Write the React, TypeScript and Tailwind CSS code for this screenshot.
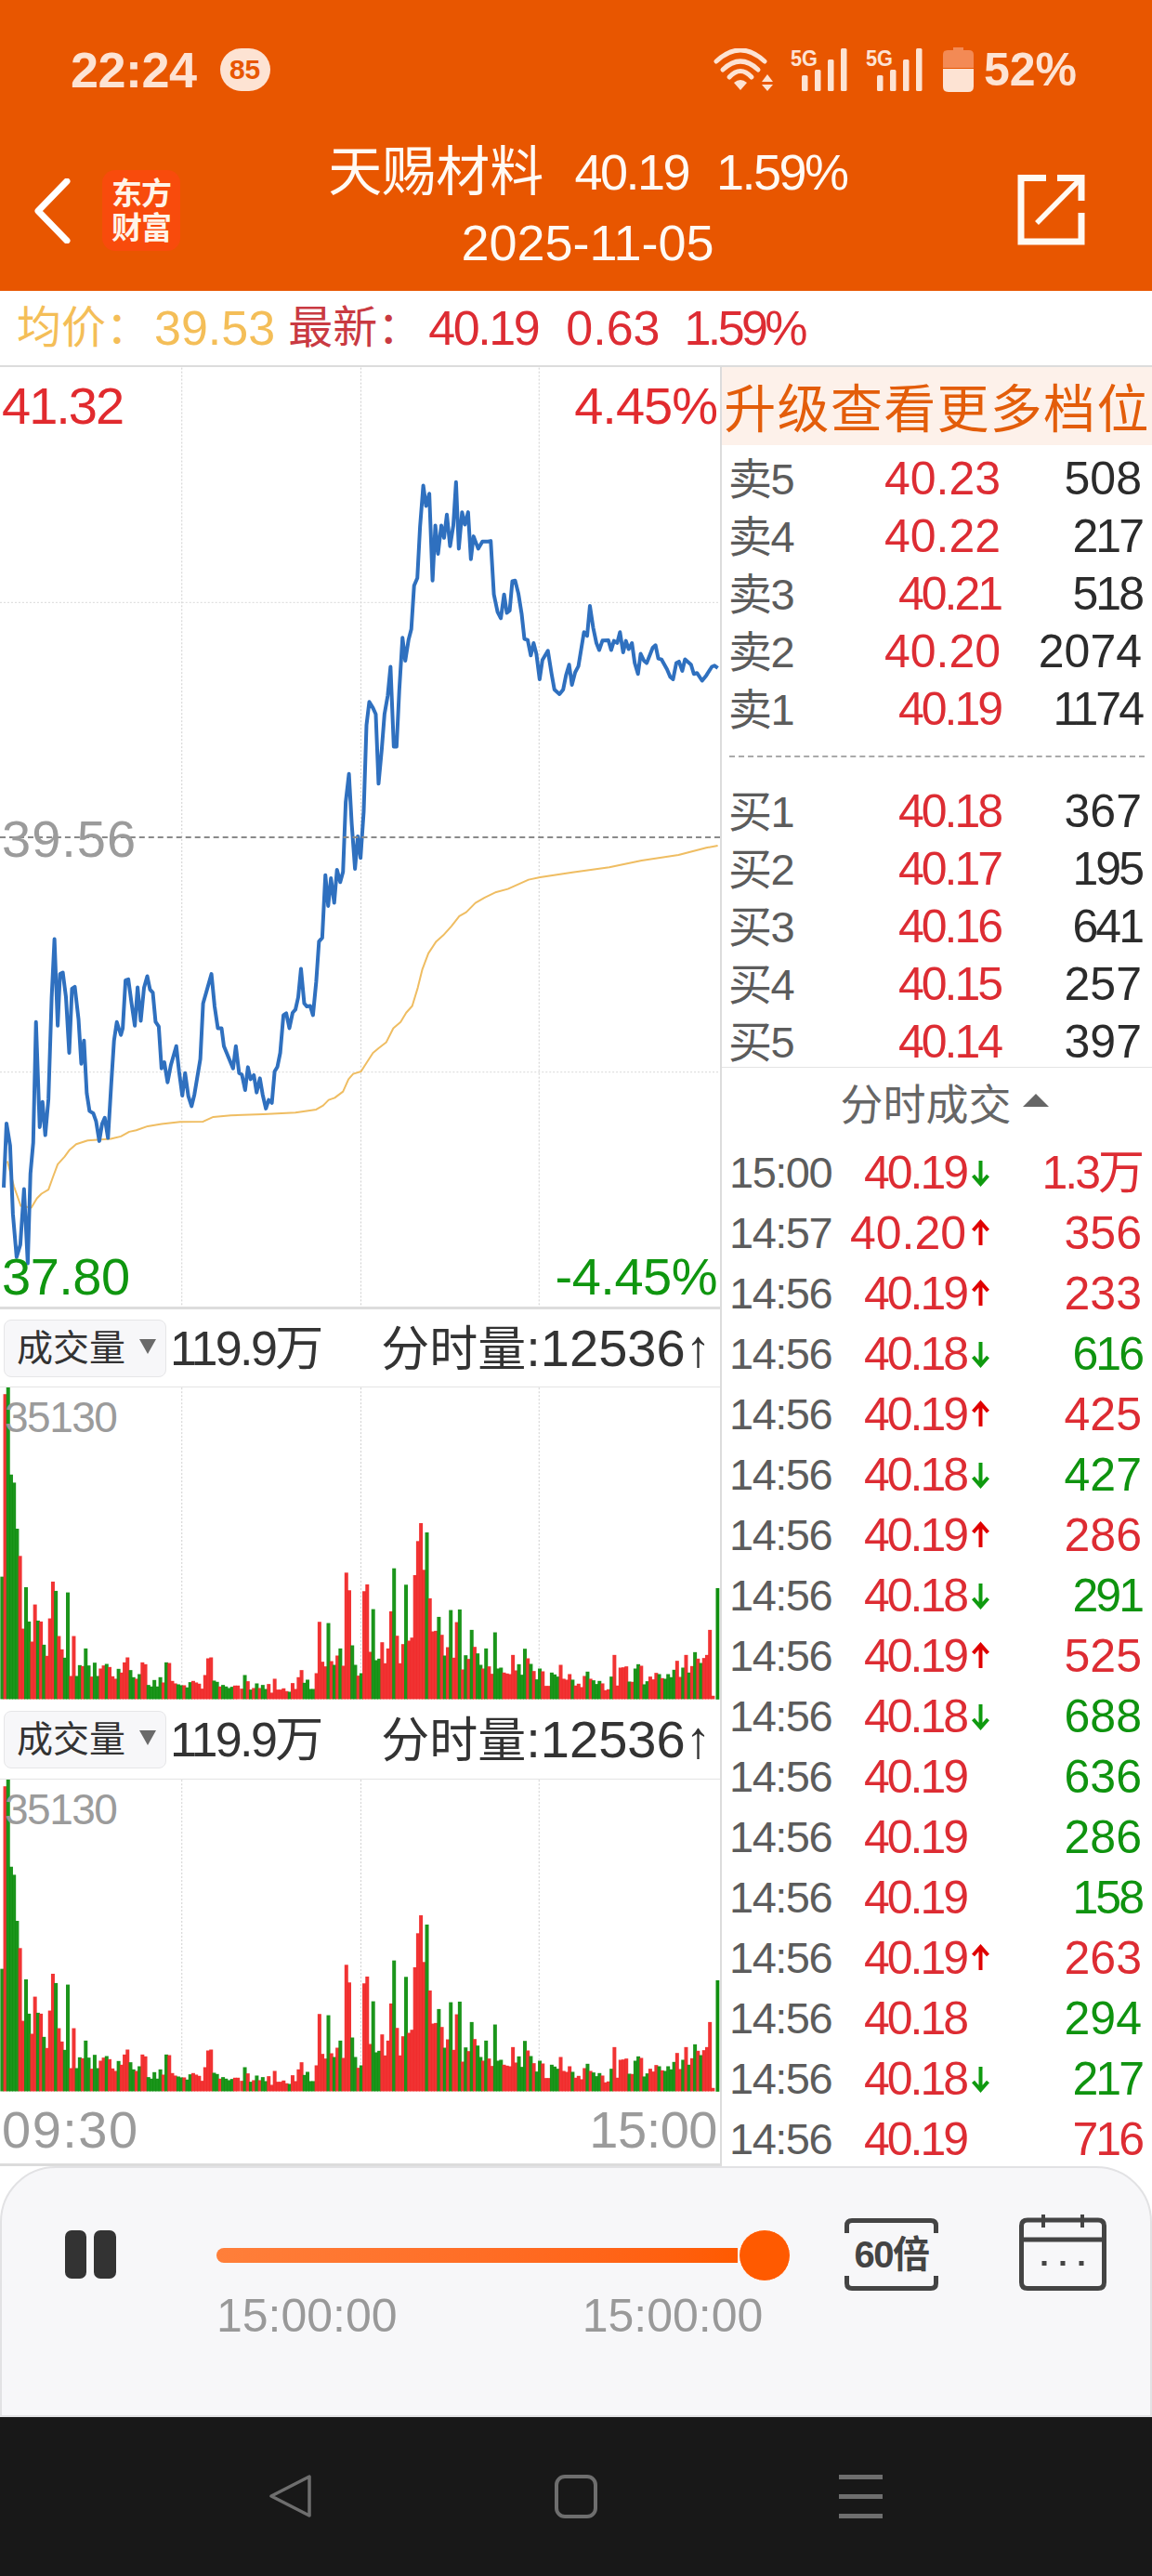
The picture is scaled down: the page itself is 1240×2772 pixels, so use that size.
import React from 'react';

// price curve, read off the reference at x*2.01 / y*3
const priceLow = '8,1135 14,928 22,1000 28,1220 36,1360 44,1320 52,1140 60,1380 66,1090 72,990 78,600 86,940 92,858 98,966 105,850 112,520 118,332 125,612 130,445 136,440 143,520 150,700 156,492 162,486 170,590 176,735 182,660 188,830 194,888 202,895 208,920 215,985 221,930 227,910 234,975 241,800 247,660 253,600 262,642 266,620 272,465 278,462 285,540 292,612 298,488 305,596 312,490 319,452 325,495 331,505 337,600 344,615 350,750 356,730 363,795 370,740 382,678 388,760 395,838 401,765 408,840 415,872 421,835 434,720 440,540 458,445 465,550 472,620 480,620 485,678 505,750 511,678 518,765 524,770 531,820 537,746 543,785 550,772 556,828 563,782 569,835 576,880 582,852 589,862 595,760 601,745 607,700 614,578 620,572 627,620 634,570 640,560 646,520 652,428 659,540 665,550 672,548 678,578 685,470 691,340 698,328 705,125 711,225 717,135 724,215 730,108 737,148 743,115';
const priceHigh = '749,1420 756,1328 762,1490 769,1635 775,1530 781,1600 788,1450 794,1170 800,1095 808,1115 814,1135 820,1360 827,1250 833,1135 840,1075 846,982 853,1240 859,1240 865,1060 872,888 878,962 885,895 891,860 897,720 904,695 910,530 917,396 923,462 930,422 937,703 943,525 949,617 956,525 962,565 968,490 975,592 982,525 988,385 994,600 1001,482 1007,522 1014,482 1020,634 1026,560 1036,600 1045,577 1057,577 1063,575 1070,748 1078,805 1085,825 1092,748 1098,808 1104,800 1110,705 1116,703 1123,745 1130,810 1136,892 1143,895 1150,945 1156,905 1162,940 1169,1022 1175,960 1187,930 1195,1005 1201,1055 1212,1070 1220,1055 1226,1010 1233,975 1239,1040 1246,1000 1253,980 1265,870 1272,882 1278,785 1285,855 1292,905 1298,928 1305,897 1318,896 1324,928 1330,898 1337,905 1343,870 1350,935 1356,898 1362,925 1369,905 1375,970 1382,1005 1388,940 1395,962 1401,970 1414,920 1420,912 1426,955 1433,958 1445,990 1452,1015 1458,1022 1465,970 1471,965 1478,995 1484,958 1497,975 1503,1005 1510,1002 1521,1027 1530,1010 1542,982 1548,978 1555,986';
const avgLine = '16,1050 30,1130 45,1195 68,1200 80,1170 90,1155 105,1142 115,1100 125,1060 140,1035 150,1015 165,995 190,983 240,978 262,970 280,955 295,950 320,937 350,930 390,923 440,922 462,907 500,902 570,898 640,893 685,883 700,870 712,852 725,845 743,825 755,785 765,768 782,760 795,730 808,700 820,685 837,665 852,620 868,600 880,570 893,548 905,490 915,430 928,378 945,340 960,320 978,290 995,258 1010,245 1030,215 1050,198 1075,180 1100,170 1145,140 1170,132 1240,116 1320,100 1390,78 1470,60 1530,37 1555,30';

const toPoints = (raw: string, offset: number) =>
  raw
    .split(' ')
    .map((p) => {
      const [x, y] = p.split(',').map(Number);
      return `${(x / 2.01).toFixed(1)},${(offset + y / 3).toFixed(1)}`;
    })
    .join(' ');

const volA = 'G620 R30 G8 G290 G316 G465 R553 R788 G654 G765 R830 R710 G762 R765 G840 R876 R755 R636 G666 R812 R855 G882 G671 R941 R812 G941 G906 R909 G852 G907 R943 G898 G941 R917 R907 G902 R912 R942 R950 G918 R930 R897 R881 G922 G945 R950 G935 R897 R903 G970 G975 G954 G975 G945 R962 G897 R899 R957 R965 G968 G971 R971 G978 G961 R957 R962 R966 R982 R938 R884 R881 G956 G960 R975 G970 G975 G980 G976 R972 R972';
const volB = 'R982 G938 R958 G985 R980 G965 R980 G970 G983 R967 R995 R950 R985 R985 R981 R990 G992 R964 R983 R945 R922 G963 G953 G983 G983 R932 R766 R895 R910 G770 R893 G905 R875 G852 R908 R607 R664 G842 G905 R940 G932 R667 R645 R863 G725 G890 G885 R832 R900 R852 R732 G593 R811 R900 R838 G646 R827 R817 R615 R505 R447 R598 G477 R690 R797 R795 G750 R808 G875 R848 G728 R882 R767 G726 R920 G874 R886 G792 R847 G868 G905';
const volC = 'R917 G852 R910 R934 G800 G917 G914 R930 R933 R935 R873 R923 G903 G937 G853 R884 G902 R925 G952 G917 R926 R973 R973 G930 G936 G943 R905 R950 R953 R935 G953 R972 R966 R977 R941 G927 R950 G955 G967 G957 R965 R987 R984 G943 R873 R972 R914 R913 R910 G959 R960 G917 G903 R908 G968 G958 R943 R952 R931 G935 R948 G950 G935 G945 G921 R892 R944 G914 R873 G930 R909 G864 R885 G899 R883 R873 R792 R1005';

const segments: [string, number][] = [
  [volA, 2.33],
  [volB, 260.67],
  [volC, 520.67],
];

const bars = segments.flatMap(([raw, start]) =>
  raw.split(' ').map((b, i) => ({
    fill: b[0] === 'R' ? '#f02828' : '#0f8f0f',
    x: start + i * 3.217,
    top: Number(b.slice(1)),
  })),
);

const GridLines = ({ height }: { height: number }) => (
  <>
    {[196, 389, 581].map((x) => (
      <line key={x} x1={x} x2={x} y1={0} y2={height} stroke="#cfcfcf" strokeWidth="1" strokeDasharray="2 2" />
    ))}
  </>
);

const VolumeHeader = () => (
  <div className="flex h-[83px] items-center pl-[4px] text-[#333]">
    <div className="flex h-[62px] w-[175px] items-center rounded-[8px] border border-[#e6e6e8] bg-[#f7f7f9] pl-[13px] text-[39px] leading-none">
      <span>成交量</span>
      <svg className="ml-[15px] mb-[4px]" width="18" height="16" viewBox="0 0 18 16">
        <path d="M0 0H18L9 16Z" fill="#6a6a6a" />
      </svg>
    </div>
    <span className="ml-[4px] text-[52px] leading-none">
      <span className="tracking-[-2.6px]">119.9</span>万
    </span>
    <span className="ml-[62px] text-[52px] leading-none">
      分时量<span className="text-[56px]">:12536↑</span>
    </span>
  </div>
);

const VolumeChart = () => (
  <div className="relative h-[337px] border-t border-[#e4e4e4]">
    <svg className="h-[336px] w-full" viewBox="0 0 776 336">
      <GridLines height={336} />
      {bars.map((b, i) => (
        <rect key={i} x={b.x - 2} y={b.top / 3 - 3} width={4} height={(1016 - b.top) / 3} fill={b.fill} opacity={0.95} />
      ))}
      <rect x={771.5} y={216} width={3.8} height={120} fill="#0f8f0f" />
    </svg>
    <span className="absolute left-[5px] top-[9px] text-[46px] leading-[46px] tracking-[-1.5px] text-[#9b9b9b]">35130</span>
  </div>
);

const asks = [
  ['卖5', '40.23', '508'],
  ['卖4', '40.22', '217'],
  ['卖3', '40.21', '518'],
  ['卖2', '40.20', '2074'],
  ['卖1', '40.19', '1174'],
];
const bids = [
  ['买1', '40.18', '367'],
  ['买2', '40.17', '195'],
  ['买3', '40.16', '641'],
  ['买4', '40.15', '257'],
  ['买5', '40.14', '397'],
];

// the reference font has a narrow 1, Liberation's is tabular
const fit = (s: string) => (s.includes('1') ? 'tracking-[-3px]' : 'tracking-normal');

const QuoteRow = ({ row }: { row: string[] }) => (
  <div className="flex h-[62px] items-center pl-[7px] pr-[11px] text-[50px] leading-none">
    <span className="w-[73px] text-[47px] tracking-[-1.5px] text-[#5c5c5c]">{row[0]}</span>
    <span className={`w-[220px] text-right text-[#dd2c33] ${fit(row[1])}`}>{row[1]}</span>
    <span className={`flex-1 text-right text-[#2b2b2b] ${fit(row[2])}`}>{row[2]}</span>
  </div>
);

type Trade = { time: string; price: string; dir?: 'up' | 'down'; size: string; up: boolean };

const trades: Trade[] = [
  { time: '15:00', price: '40.19', dir: 'down', size: '1.3万', up: true },
  { time: '14:57', price: '40.20', dir: 'up', size: '356', up: true },
  { time: '14:56', price: '40.19', dir: 'up', size: '233', up: true },
  { time: '14:56', price: '40.18', dir: 'down', size: '616', up: false },
  { time: '14:56', price: '40.19', dir: 'up', size: '425', up: true },
  { time: '14:56', price: '40.18', dir: 'down', size: '427', up: false },
  { time: '14:56', price: '40.19', dir: 'up', size: '286', up: true },
  { time: '14:56', price: '40.18', dir: 'down', size: '291', up: false },
  { time: '14:56', price: '40.19', dir: 'up', size: '525', up: true },
  { time: '14:56', price: '40.18', dir: 'down', size: '688', up: false },
  { time: '14:56', price: '40.19', size: '636', up: false },
  { time: '14:56', price: '40.19', size: '286', up: false },
  { time: '14:56', price: '40.19', size: '158', up: false },
  { time: '14:56', price: '40.19', dir: 'up', size: '263', up: true },
  { time: '14:56', price: '40.18', size: '294', up: false },
  { time: '14:56', price: '40.18', dir: 'down', size: '217', up: false },
  { time: '14:56', price: '40.19', size: '716', up: true },
];

const TradeArrow = ({ dir }: { dir?: 'up' | 'down' }) => (
  <svg className="ml-[5px] shrink-0" width="21" height="30" viewBox="0 0 21 30">
    {dir === 'up' && <path d="M10.5 28V4M2.5 12L10.5 3L18.5 12" fill="none" stroke="#e00000" strokeWidth="4" />}
    {dir === 'down' && <path d="M10.5 2V26M2.5 18L10.5 27L18.5 18" fill="none" stroke="#0f9a0f" strokeWidth="4" />}
  </svg>
);

const TradeRow = ({ t }: { t: Trade }) => (
  <div className="flex h-[65px] shrink-0 items-center pl-[8px] pr-[11px] text-[50px] leading-none">
    <span className="w-[116px] text-[47px] tracking-[-1.5px] text-[#5c5c5c]">{t.time}</span>
    <span className={`w-[139px] text-right text-[#dd2c33] ${fit(t.price)}`}>{t.price}</span>
    <TradeArrow dir={t.dir} />
    <span className={`flex-1 text-right ${fit(t.size)} ${t.up ? 'text-[#dd2c33]' : 'text-[#0f930f]'}`}>{t.size}</span>
  </div>
);

const SignalIcon = () => (
  <svg className="overflow-visible" width="61" height="46" viewBox="0 0 61 46" fill="#fde3d3">
    <text x="0" y="19" fontSize="24" fontWeight="700" textLength="29" lengthAdjust="spacingAndGlyphs">5G</text>
    <rect x="12" y="29" width="6.5" height="17" rx="1.5" />
    <rect x="26" y="23" width="6.5" height="23" rx="1.5" />
    <rect x="40" y="12" width="6.5" height="34" rx="1.5" />
    <rect x="54" y="0" width="6.5" height="46" rx="1.5" />
  </svg>
);

const StatusBar = () => (
  <div className="flex h-[102px] items-center pl-[76px] pr-[81px] pt-[47px] font-bold text-[#fde3d3]">
    <span className="text-[54px] leading-none tracking-[-0.5px]">22:24</span>
    <span className="ml-[25px] flex h-[46px] w-[54px] items-center justify-center rounded-full bg-[#fde3d3] text-[30px] leading-none text-[#e85600]">85</span>
    <svg className="ml-auto" width="64" height="46" viewBox="0 0 64 46">
      <g fill="none" stroke="#fde3d3" strokeWidth="5" strokeLinecap="round">
        <path d="M3 14Q29 -10 55 14" />
        <path d="M10 23Q29 5 48 23" />
        <path d="M17 31Q29 18 41 31" />
      </g>
      <path d="M22 37Q29 31 36 37L29 45Z" fill="#fde3d3" />
      <path d="M52 36L58 28L64 36ZM52 39H64L58 46Z" fill="#fde3d3" />
    </svg>
    <span className="ml-[19px]"><SignalIcon /></span>
    <span className="ml-[20px]"><SignalIcon /></span>
    <svg className="ml-[22px]" width="33" height="48" viewBox="0 0 33 48">
      <path d="M11 0H22V3H28Q33 3 33 8V22H0V8Q0 3 5 3H11Z" fill="#f38a55" />
      <path d="M0 23H33V42Q33 48 27 48H6Q0 48 0 42Z" fill="#fde3d3" />
    </svg>
    <span className="ml-[11px] text-[50px] leading-none">52%</span>
  </div>
);

const NavHeader = () => (
  <div className="flex h-[211px] items-start pl-[36px] pr-[72px]">
    <svg className="mt-[90px] shrink-0" width="40" height="70" viewBox="0 0 40 70">
      <path d="M36 3L5 35L36 67" fill="none" stroke="#fff" strokeWidth="7" strokeLinecap="round" strokeLinejoin="round" />
    </svg>
    <div className="ml-[34px] mt-[81px] flex h-[87px] w-[84px] shrink-0 flex-col items-center justify-center rounded-[14px] bg-[#f84b0c] text-[33px] font-bold leading-[37px] tracking-[-1px] text-[#fff4e8]">
      <span>东方</span>
      <span>财富</span>
    </div>
    <div className="flex flex-1 flex-col items-center pr-[24px] pt-[54px] text-[#fffaf4]">
      <div className="flex h-[58px] items-center leading-none">
        <span className="text-[58px]">天赐材料</span>
        <span className="ml-[33px] text-[54px] tracking-[-2.5px]">40.19</span>
        <span className="ml-[30px] text-[54px] tracking-[-2.5px]">1.59%</span>
      </div>
      <span className="mt-[20px] text-[54px] leading-none">2025-11-05</span>
    </div>
    <svg className="mt-[86px] shrink-0" width="73" height="76" viewBox="0 0 73 76" fill="none" stroke="#fffaf4" strokeWidth="7">
      <path d="M31 3.5H4V72H69V41" />
      <path d="M43 3.5H69V28" />
      <path d="M69 3.5L21 52" strokeWidth="5.5" />
    </svg>
  </div>
);

const SummaryBar = () => (
  <div className="flex h-[82px] items-center border-b-2 border-[#dcdcdc] pl-[18px] text-[52px] leading-none text-[#dd2c33]">
    <span className="text-[48px] text-[#f4be58]">均价：</span>
    <span className="ml-[4px] text-[#f4be58]">39.53</span>
    <span className="ml-[14px] text-[48px] text-[#c93a42]">最新：</span>
    <span className="ml-[7px] tracking-[-2.4px]">40.19</span>
    <span className="ml-[30px]">0.63</span>
    <span className="ml-[26px] tracking-[-3.6px]">1.59%</span>
  </div>
);

const PriceChart = () => (
  <div className="relative h-[1011px]">
    <svg className="h-full w-full" viewBox="0 0 776 1011">
      <GridLines height={1011} />
      <line x1={0} x2={775} y1={253} y2={253} stroke="#d8d8d8" strokeWidth="1" strokeDasharray="2 2" />
      <line x1={0} x2={775} y1={759} y2={759} stroke="#d8d8d8" strokeWidth="1" strokeDasharray="2 2" />
      <polyline points={toPoints(avgLine, 505)} fill="none" stroke="#efbd62" strokeWidth="2" strokeLinejoin="round" />
      <polyline
        points={`${toPoints(priceLow, 505)} ${toPoints(priceHigh, -5)}`}
        fill="none"
        stroke="#2f70bf"
        strokeWidth="4"
        strokeLinejoin="round"
      />
    </svg>
    <div className="absolute left-0 right-0 top-[505px] border-t-2 border-dashed border-[#8a8a8a]" />
    <span className="absolute left-[2px] top-[14px] text-[56px] leading-[56px] tracking-[-2px] text-[#e12a2e]">41.32</span>
    <span className="absolute right-[3px] top-[14px] text-[56px] leading-[56px] tracking-[-1px] text-[#e12a2e]">4.45%</span>
    <span className="absolute left-[2px] top-[480px] text-[56px] leading-[56px] tracking-[1px] text-[#9b9b9b]">39.56</span>
    <span className="absolute left-[2px] top-[951px] text-[56px] leading-[56px] tracking-[-0.5px] text-[#0f960f]">37.80</span>
    <span className="absolute right-[3px] top-[951px] text-[56px] leading-[56px] tracking-[-0.5px] text-[#0f960f]">-4.45%</span>
  </div>
);

const LeftPanel = () => (
  <div className="w-[777px] shrink-0 border-r-2 border-[#dcdcdc]">
    <PriceChart />
    <div className="h-[3px] bg-[#dcdcdc]" />
    <VolumeHeader />
    <VolumeChart />
    <div className="h-[85px] pt-[1px]">
      <VolumeHeader />
    </div>
    <VolumeChart />
    <div className="flex h-[80px] items-center justify-between border-b-[3px] border-[#dcdcdc] pl-[2px] pr-[3px] pt-[4px] text-[56px] leading-none text-[#9b9b9b]">
      <span className="tracking-[1.5px]">09:30</span>
      <span className="tracking-[-0.5px]">15:00</span>
    </div>
  </div>
);

const RightPanel = () => (
  <div className="flex h-[1936px] flex-1 flex-col overflow-hidden">
    <div className="flex h-[84px] shrink-0 items-center justify-center bg-[#fdf1ea] pt-[8px] text-[56px] leading-none tracking-[1.3px] text-[#e35d0a]">
      升级查看更多档位
    </div>
    <div className="shrink-0 pt-[5px]">
      {asks.map((r) => (
        <QuoteRow key={r[0]} row={r} />
      ))}
    </div>
    <div className="mx-[8px] mb-[27px] mt-[19px] shrink-0 border-t-2 border-dashed border-[#aaaaaa]" />
    <div className="h-[307px] shrink-0 border-b border-[#e4e4e4]">
      {bids.map((r) => (
        <QuoteRow key={r[0]} row={r} />
      ))}
    </div>
    <div className="flex h-[80px] shrink-0 items-center justify-center pl-[16px] text-[46px] leading-none text-[#666]">
      <span>分时成交</span>
      <svg className="ml-[12px] mb-[10px]" width="28" height="14" viewBox="0 0 28 14">
        <path d="M14 0L28 14H0Z" fill="#666" />
      </svg>
    </div>
    {trades.map((t, i) => (
      <TradeRow key={i} t={t} />
    ))}
  </div>
);

const PlayerPanel = () => (
  <div className="flex h-[270px] items-start rounded-t-[60px] border-2 border-[#e2e2e4] bg-[#f7f7f9] pl-[68px] pt-[50px]">
    <div className="mt-[17px] flex gap-[8px]">
      <div className="h-[52px] w-[23px] rounded-[7px] bg-[#333]" />
      <div className="h-[52px] w-[24px] rounded-[7px] bg-[#333]" />
    </div>
    <div className="ml-[108px] mt-[16px] w-[618px]">
      <div className="flex items-center">
        <div className="h-[16px] flex-1 rounded-l-full bg-gradient-to-r from-[#ff7f3a] to-[#ff5a00]" />
        <div className="ml-[1px] h-[56px] w-[56px] rounded-full border border-white bg-[#ff5a00]" />
      </div>
      <div className="mt-[12px] flex gap-[199px] text-[50px] leading-none text-[#999]">
        <span>15:00:00</span>
        <span>15:00:00</span>
      </div>
    </div>
    <div className="relative ml-[58px] mt-[4px] flex h-[78px] w-[101px] items-center justify-center">
      <svg className="absolute inset-0" width="101" height="78" viewBox="0 0 101 78" fill="none" stroke="#444" strokeWidth="5">
        <path d="M2.5 16V8Q2.5 2.5 8 2.5H93Q98.5 2.5 98.5 8V16" />
        <path d="M2.5 62V70Q2.5 75.5 8 75.5H93Q98.5 75.5 98.5 70V62" />
      </svg>
      <span className="text-[40px] font-bold leading-none tracking-[-1.5px] text-[#444]">60倍</span>
    </div>
    <svg className="ml-[87px]" width="94" height="82" viewBox="0 0 94 82" fill="none" stroke="#444" strokeWidth="5">
      <path d="M9 6H85Q91.5 6 91.5 12V73Q91.5 79.5 85 79.5H9Q2.5 79.5 2.5 73V12Q2.5 6 9 6Z" />
      <path d="M3 27H91" />
      <path d="M26 0V14M68 0V14" strokeWidth="4" />
      <path d="M27 50V55M47 50V55M67 50V55" strokeWidth="5" />
    </svg>
  </div>
);

const NavBar = () => (
  <div className="flex h-[171px] items-start bg-[#181818] pl-[290px] pt-[62px]">
    <svg width="45" height="46" viewBox="0 0 45 46" fill="none" stroke="#6e6e6e" strokeWidth="3.5" strokeLinejoin="round">
      <path d="M43 2V44L2 23Z" />
    </svg>
    <svg className="ml-[262px]" width="46" height="47" viewBox="0 0 46 47" fill="none" stroke="#6e6e6e" strokeWidth="4">
      <rect x="2" y="2" width="42" height="43" rx="9" />
    </svg>
    <div className="ml-[260px] flex h-[47px] w-[47px] flex-col justify-between">
      <div className="h-[5px] bg-[#6e6e6e]" />
      <div className="h-[5px] bg-[#6e6e6e]" />
      <div className="h-[5px] bg-[#6e6e6e]" />
    </div>
  </div>
);

export default function App() {
  return (
    <div className="flex h-[2772px] w-[1240px] flex-col overflow-hidden bg-white [font-family:'Liberation_Sans','Noto_Sans_CJK_SC',sans-serif]">
      <div className="h-[313px] shrink-0 bg-[#e85600]">
        <StatusBar />
        <NavHeader />
      </div>
      <SummaryBar />
      <div className="flex h-[1936px] shrink-0">
        <LeftPanel />
        <RightPanel />
      </div>
      <PlayerPanel />
      <NavBar />
    </div>
  );
}
